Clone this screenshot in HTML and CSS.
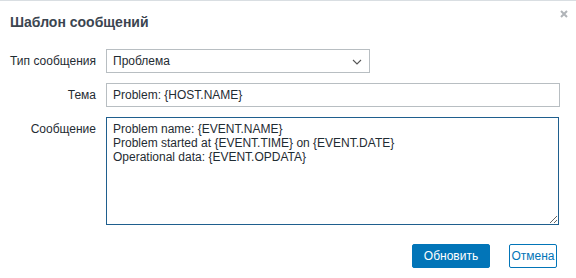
FILE: index.html
```html
<!DOCTYPE html>
<html lang="ru">
<head>
<meta charset="utf-8">
<title>Шаблон сообщений</title>
<link rel="stylesheet" href="styles.css">
</head>
<body>
<div class="dialog">
  <div class="dialog-head">
    <h2 class="dialog-title">Шаблон сообщений</h2>
    <button class="dialog-close" type="button" aria-label="Закрыть">
      <svg width="8" height="8" viewBox="0 0 8 8"><path d="M1 1 L7 7 M7 1 L1 7" stroke="#b0b4b8" stroke-width="2" fill="none"/></svg>
    </button>
  </div>
  <form class="form">
    <label class="form-label">Тип сообщения</label>
    <div class="form-field">
      <div class="select">
        <span class="select-value">Проблема</span>
        <svg class="select-arrow" width="10" height="6" viewBox="0 0 10 6"><path d="M1 1 L5 5 L9 1" stroke="#555" stroke-width="1.1" fill="none"/></svg>
      </div>
    </div>
    <label class="form-label">Тема</label>
    <div class="form-field">
      <input class="input" type="text" value="Problem: {HOST.NAME}">
    </div>
    <label class="form-label form-label-top">Сообщение</label>
    <div class="form-field">
      <textarea class="textarea">Problem name: {EVENT.NAME}
Problem started at {EVENT.TIME} on {EVENT.DATE}
Operational data: {EVENT.OPDATA}</textarea>
    </div>
  </form>
  <div class="dialog-foot">
    <button class="btn btn-primary" type="button">Обновить</button>
    <button class="btn btn-alt" type="button">Отмена</button>
  </div>
</div>
</body>
</html>
```
FILE: styles.css
```css
* { box-sizing: border-box; }
html, body { margin: 0; padding: 0; background: #ffffff; }
body {
  font-family: "Liberation Sans", Arial, sans-serif;
  font-size: 12px;
  color: #1f2c33;
}
.dialog {
  width: 576px;
  height: 278px;
  border-top: 1px solid #d9dee2;
  background: #fff;
}
.dialog-head {
  position: relative;
  padding: 13px 10px 0 10px;
  height: 48px;
}
.dialog-title {
  margin: 0;
  font-size: 14px;
  font-weight: bold;
  color: #3b4550;
  line-height: 17px;
}
.dialog-close {
  position: absolute;
  top: 7px;
  right: 6px;
  width: 12px;
  height: 12px;
  padding: 0;
  border: 0;
  background: none;
  display: flex;
  align-items: center;
  justify-content: center;
}
.form {
  display: grid;
  grid-template-columns: 96px 454px;
  column-gap: 10px;
  row-gap: 10px;
  margin: 0;
}
.form-label {
  text-align: right;
  line-height: 24px;
  color: #1f2c33;
}
.form-label-top { line-height: 18px; padding-top: 3px; }
.form-field { display: flex; }
.select {
  width: 264px;
  height: 24px;
  border: 1px solid #b8bec2;
  display: flex;
  align-items: center;
  justify-content: space-between;
  padding: 0 7px 0 6px;
  background: #fff;
}
.select-arrow { display: block; margin-top: 1px; }
.input {
  width: 454px;
  height: 24px;
  border: 1px solid #b8bec2;
  padding: 0 6px;
  font: inherit;
  color: #1f2c33;
  outline: none;
}
.textarea {
  width: 453px;
  height: 108px;
  border: 1px solid #1f5f8e;
  padding: 4px 6px;
  font: inherit;
  line-height: 14px;
  color: #1f2c33;
  outline: none;
  resize: both;
  margin: 0;
}
.dialog-foot {
  display: flex;
  justify-content: flex-end;
  gap: 19px;
  padding: 19px 19px 0 0;
}
.btn {
  height: 24px;
  font: inherit;
  font-size: 12px;
  padding: 0 10px;
  border-radius: 2px;
  cursor: pointer;
}
.btn-primary {
  width: 78px;
  background: #0275b8;
  border: 1px solid #0275b8;
  color: #ffffff;
}
.btn-alt {
  width: 48px;
  background: #ffffff;
  border: 1px solid #0275b8;
  color: #0275b8;
  padding: 0;
}
```
